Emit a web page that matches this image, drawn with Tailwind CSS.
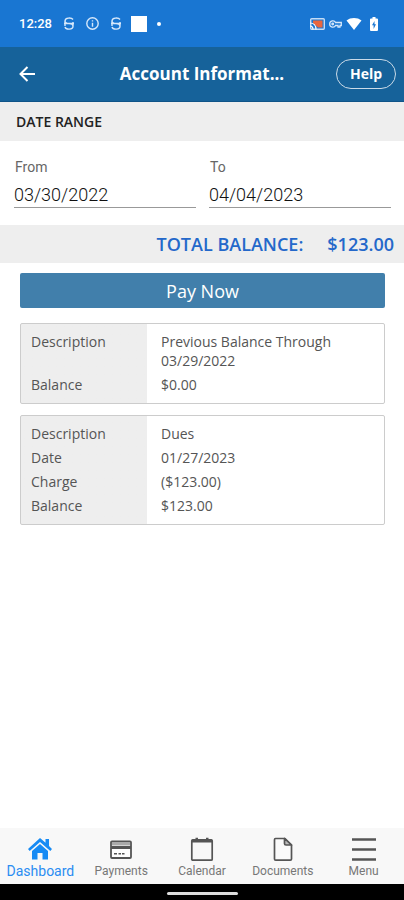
<!DOCTYPE html>
<html lang="en">
<head>
<meta charset="utf-8">
<meta name="viewport" content="width=device-width, initial-scale=1">
<title>Account Information</title>
<script src="https://cdn.jsdelivr.net/npm/@tailwindcss/browser@4"></script>
</head>
<body class="flex min-h-screen flex-col bg-white font-['Open_Sans','Noto_Sans',sans-serif] text-[#555]">
<div class="flex h-[47px] items-center justify-between bg-[#1976d2] pr-[26px] pl-[19px] text-white">
  <div class="flex items-center gap-3">
    <span class="font-['Roboto',sans-serif] text-[13px] font-medium">12:28</span>
    <svg class="h-[13px] w-2.5" viewBox="0 0 10 13" fill="none" stroke="#d6e8fb" stroke-width="1.4"><path d="M9 2.500C7.500 .5 1 .3 1 4c0 2.300 2 2.500 4 2.500s4 .5 4 2.700c0 3.800-7 3.800-8 .8M0 6.500h10M9 5v4M1 4v5"/></svg>
    <svg class="size-[13px]" viewBox="0 0 13 13" fill="none" stroke="#d6e8fb" stroke-width="1.400"><circle cx="6.500" cy="6.500" r="5.700"/><path d="M6.500 5.700v4M6.500 3.300v1.300"/></svg>
    <svg class="h-[13px] w-2.5" viewBox="0 0 10 13" fill="none" stroke="#d6e8fb" stroke-width="1.4"><path d="M9 2.500C7.500 .5 1 .3 1 4c0 2.300 2 2.500 4 2.500s4 .5 4 2.700c0 3.800-7 3.800-8 .8M0 6.500h10M9 5v4M1 4v5"/></svg>
    <svg class="-mx-0.5 h-4 w-4" viewBox="0 0 16 16"><path fill="#fff" d="M0 0h16v16H0z"/></svg>
    <svg class="h-1 w-1" viewBox="0 0 4 4"><circle cx="2" cy="2" r="2" fill="#fff"/></svg>
  </div>
  <div class="flex items-center gap-1">
    <svg class="h-3 w-[15px]" viewBox="0 0 15 12"><rect x=".7" y=".7" width="13.600" height="10.600" rx="1" fill="none" stroke="#c5dcf5" stroke-width="1.400"/><path fill="#e8663f" d="M3 2.500h9.500v7H8L3 5z"/><path fill="none" stroke="#fff" stroke-width="1.200" d="M0 5c3.500 0 6 2.500 6 6.500M0 8c2 0 3 1.300 3 3.500"/></svg>
    <svg class="h-2 w-[13px]" viewBox="0 0 13 8" fill="none" stroke="#d6e8fb" stroke-width="1.300"><path d="M6.500 2.500C5.500 0 .7.200.7 4s4.800 4 5.800 1.500H9V7h2V5.500h1.300v-3z"/><circle cx="3.700" cy="4" r=".8"/></svg>
    <svg class="h-3 w-4" viewBox="0 0 16 12"><path fill="#fff" d="M.5 2.500C4.500-.8 11.500-.8 15.500 2.500L8 12z"/></svg>
    <svg class="ml-1 h-3.5 w-2" viewBox="0 0 8 14"><path fill="#fff" d="M2.500 0h3v1.500H7q1 0 1 1V13q0 1-1 1H1q-1 0-1-1V2.500q0-1 1-1h1.500z"/><path fill="#1976d2" d="M4.500 4L2 8.300h1.600V12L6 7.300H4.500z"/></svg>
  </div>
</div>

<header class="grid h-[55px] grid-cols-[1fr_auto_1fr] items-center border-b border-[#0f5488] bg-[#16629a] px-2 text-white">
  <button type="button" aria-label="Back" class="w-10 pl-[11px]"><svg class="h-4 w-4" viewBox="0 0 16 16" fill="none" stroke="#fff" stroke-width="2"><path d="M8.500 1L1.500 8l7 7M1.500 8H16"/></svg></button>
  <h1 class="text-[17px] font-bold">Account Informat...</h1>
  <button type="button" class="h-[30px] w-[60px] justify-self-end rounded-full border border-[#cbdbe8] text-sm font-bold">Help</button>
</header>

<main class="grow">
  <h2 class="flex h-[39px] items-center bg-[#eee] px-4 text-sm font-semibold text-[#222]">DATE RANGE</h2>
  <form class="grid grid-cols-2 gap-[13px] pt-4 pr-[13px] pb-[17px] pl-3.5 font-['Roboto',sans-serif]">
    <div class="flex flex-col">
      <label for="from" class="px-px text-sm leading-5 text-[#666]">From</label>
      <input id="from" type="text" value="03/30/2022" class="mt-1 h-[27px] w-full border-b border-[#999] text-lg leading-6 font-light text-[#111] outline-none">
    </div>
    <div class="flex flex-col">
      <label for="to" class="px-px text-sm leading-5 text-[#666]">To</label>
      <input id="to" type="text" value="04/04/2023" class="mt-1 h-[27px] w-full border-b border-[#999] text-lg leading-6 font-light text-[#111] outline-none">
    </div>
  </form>
  <div class="flex h-[38px] items-center justify-end gap-6 bg-[#eee] px-2.5 text-lg font-semibold text-[#2468ca]">
    <span>TOTAL BALANCE:</span><span>$123.00</span>
  </div>
  <div class="flex flex-col pt-2.5 pr-[19px] pl-5">
    <button type="button" class="h-[35px] rounded-xs bg-[#417fab] text-lg leading-6 text-white">Pay Now</button>
    <div class="mt-[15px] rounded-xs border border-[#ccc] bg-linear-to-r from-[#eee] from-[126px] to-white to-[126px] py-1.5">
      <table class="w-full table-fixed text-left text-sm leading-[19px]">
        <tbody>
          <tr><th scope="row" class="w-[126px] pt-0.5 pb-[3px] pl-2.5 align-top font-normal">Description</th><td class="pt-0.5 pb-[3px] pl-3.5 align-top">Previous Balance Through<br>03/29/2022</td></tr>
          <tr><th scope="row" class="pt-0.5 pb-[3px] pl-2.5 align-top font-normal">Balance</th><td class="pt-0.5 pb-[3px] pl-3.5 align-top">$0.00</td></tr>
        </tbody>
      </table>
    </div>
    <div class="mt-[11px] rounded-xs border border-[#ccc] bg-linear-to-r from-[#eee] from-[126px] to-white to-[126px] py-1.5">
      <table class="w-full table-fixed text-left text-sm leading-[19px]">
        <tbody>
          <tr><th scope="row" class="w-[126px] pt-0.5 pb-[3px] pl-2.5 font-normal">Description</th><td class="pt-0.5 pb-[3px] pl-3.5">Dues</td></tr>
          <tr><th scope="row" class="pt-0.5 pb-[3px] pl-2.5 font-normal">Date</th><td class="pt-0.5 pb-[3px] pl-3.5">01/27/2023</td></tr>
          <tr><th scope="row" class="pt-0.5 pb-[3px] pl-2.5 font-normal">Charge</th><td class="pt-0.5 pb-[3px] pl-3.5">($123.00)</td></tr>
          <tr><th scope="row" class="pt-0.5 pb-[3px] pl-2.5 font-normal">Balance</th><td class="pt-0.5 pb-[3px] pl-3.5">$123.00</td></tr>
        </tbody>
      </table>
    </div>
  </div>
</main>

<nav class="grid h-14 grid-cols-5 bg-[#f8f8f8] font-['Roboto',sans-serif] text-xs leading-4 text-[#777]">
  <a href="#" class="flex flex-col items-center pt-2 text-sm leading-4 text-[#2b8df2]">
    <svg class="h-[27px] w-6" viewBox="0 0 24 26" fill="#178bf4"><path d="M12 7.500l8 7V23h-5.500v-6.500h-5V23H4v-8.500z"/><path d="M12 1.500L17.500 6.300V2.500H21v7l3 2.900-1.700 2L12 5.400 1.700 14.400 0 12.400z"/></svg>
    Dashboard</a>
  <a href="#" class="flex flex-col items-center pt-2">
    <svg class="h-[27px] w-6" viewBox="0 0 24 26"><rect x="2" y="5" width="20" height="16.500" rx="1" fill="#fff" stroke="#555" stroke-width="1.800"/><path fill="#aaa" d="M3 6h18v3H3z"/><path fill="#555" d="M2 9.500h20v3H2zM5 16.500h3v1.500H5zM9.500 16.500h2.500v1.500H9.500zM13 16.500h2.500v1.500H13z"/></svg>
    Payments</a>
  <a href="#" class="flex flex-col items-center pt-2">
    <svg class="h-[27px] w-6" viewBox="0 0 24 26"><rect x="1.800" y="3.300" width="20.400" height="20.400" rx="1" fill="none" stroke="#555" stroke-width="1.700"/><path fill="#555" d="M2 3h20v3H2zM5.500 1.300h2.500V5H5.500zM16 1.300h2.500V5H16z"/></svg>
    Calendar</a>
  <a href="#" class="flex flex-col items-center pt-2">
    <svg class="h-[27px] w-6" viewBox="0 0 24 26" stroke="#555" stroke-width="1.700" stroke-linejoin="round"><path fill="#fafafa" d="M4.500 2H14l6.500 6.500V22.500q0 1.200-1.200 1.200H4.700q-1.200 0-1.200-1.200V3.200Q3.500 2 4.500 2z"/><path fill="#bbb" d="M13.500 2v5q0 1.500 1.500 1.500h5.500z"/></svg>
    Documents</a>
  <a href="#" class="flex flex-col items-center pt-2">
    <svg class="h-[27px] w-6" viewBox="0 0 24 26" stroke="#555" stroke-width="2.300"><path d="M0 3h24M0 13h24M0 23h24"/></svg>
    Menu</a>
</nav>
<div class="flex h-4 justify-center bg-black pt-2"><div class="h-[3px] w-[71px] rounded-full bg-[#ddd]"></div></div>
</body>
</html>
